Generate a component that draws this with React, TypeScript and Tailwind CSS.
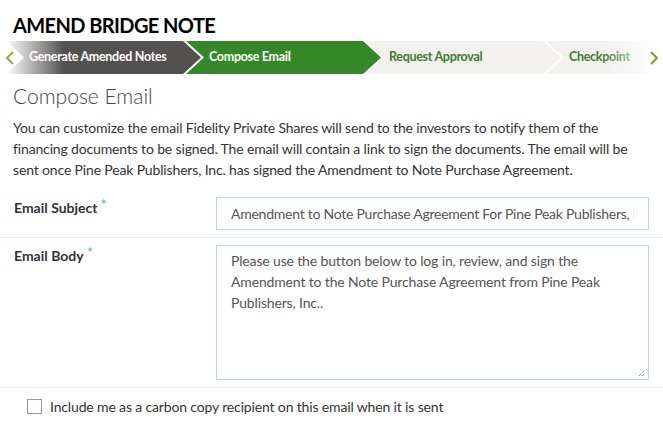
import React from "react";

const steps = [
  { label: "Generate Amended Notes", cls: "bg-[#53514f] text-white" },
  { label: "Compose Email", cls: "bg-[#368729] text-white" },
  { label: "Request Approval", cls: "bg-[#f2f1ee] text-[#3a7d2e]" },
  { label: "Checkpoint", cls: "bg-[#f2f1ee] text-[#3a7d2e]" },
];

function Breadcrumb() {
  return (
    <div className="relative h-[33px] overflow-hidden bg-white">
      <div className="flex h-full pl-[6px]">
        {steps.map((s, i) => (
          <div
            key={s.label}
            className={`shrink-0 h-full w-[195px] flex items-center pl-[23px] text-[12.5px] font-bold tracking-[-0.3px] ${
              i > 0 ? "-ml-[15px]" : ""
            } ${s.cls} [clip-path:polygon(0_0,177px_0,195px_50%,177px_100%,0_100%,18px_50%)]`}
          >
            {s.label}
          </div>
        ))}
      </div>

      {/* edge fades */}
      <div className="absolute left-0 top-0 h-full w-[64px] bg-gradient-to-r from-white from-10% to-transparent" />
      <div className="absolute right-0 top-0 h-full w-[60px] bg-gradient-to-l from-white from-10% to-transparent" />

      {/* scroll arrows */}
      <svg className="absolute left-[5px] top-[10px]" width="10" height="14" viewBox="0 0 10 14">
        <polyline points="8,1 2,7 8,13" fill="none" stroke="#8cb43c" strokeWidth="2" />
      </svg>
      <svg className="absolute right-[4px] top-[10px]" width="10" height="14" viewBox="0 0 10 14">
        <polyline points="2,1 8,7 2,13" fill="none" stroke="#6aa336" strokeWidth="2" />
      </svg>
    </div>
  );
}

function Req() {
  return <span className="ml-[3px] align-top text-[15px] leading-[14px] text-[#5aaad8] font-normal">*</span>;
}

export default function App() {
  return (
    <div className="w-[663px] h-[436px] bg-white overflow-hidden font-['Lato',sans-serif] text-[#333]">
      {/* Page title */}
      <h1 className="px-[13px] pt-[13px] pb-[4px] text-[20px] leading-[24px] font-bold text-black tracking-[-0.6px]">
        AMEND BRIDGE NOTE
      </h1>

      <Breadcrumb />

      <div className="px-[13px]">
        <h2 className="mt-[8px] text-[21px] leading-[28px] font-light text-[#444]">Compose Email</h2>
        <p className="mt-[7px] text-[14px] leading-[21px] text-[#333] tracking-[-0.15px]">
          You can customize the email Fidelity Private Shares will send to the investors to notify them of the
          financing documents to be signed. The email will contain a link to sign the documents. The email will be
          sent once Pine Peak Publishers, Inc. has signed the Amendment to Note Purchase Agreement.
        </p>
      </div>

      {/* Form */}
      <div className="mt-[17px]">
        <div className="flex border-b border-[#ebebeb] pb-[7px]">
          <label className="w-[216px] shrink-0 pl-[14px] text-[14px] leading-[21px] font-bold text-[#333]">
            Email Subject
            <Req />
          </label>
          <input
            readOnly
            value="Amendment to Note Purchase Agreement For Pine Peak Publishers, Inc."
            className="w-[433px] h-[33px] border border-[#c9d4d4] px-[14px] text-[14px] text-[#555] tracking-[-0.25px] outline-none"
          />
        </div>

        <div className="flex border-b border-[#ebebeb] pt-[7px] pb-[7px]">
          <label className="w-[216px] shrink-0 pl-[14px] text-[14px] leading-[21px] font-bold text-[#333]">
            Email Body
            <Req />
          </label>
          <div className="relative w-[433px] h-[135px] border border-[#c9d4d4] px-[14px] py-[4px] text-[14px] leading-[21px] text-[#555] tracking-[-0.15px]">
            Please use the button below to log in, review, and sign the Amendment to the Note Purchase Agreement from
            Pine Peak Publishers, Inc..
            <svg className="absolute right-[2px] bottom-[2px]" width="8" height="8" viewBox="0 0 8 8">
              <line x1="1" y1="7" x2="7" y2="1" stroke="#666" strokeWidth="1" strokeDasharray="1 1" />
              <line x1="4" y1="7" x2="7" y2="4" stroke="#666" strokeWidth="1" strokeDasharray="1 1" />
            </svg>
          </div>
        </div>

        <div className="flex items-center pl-[27px] pt-[8px]">
          <span className="w-[15px] h-[15px] border border-[#8c9a9a] bg-white" />
          <span className="ml-[8px] text-[14px] text-[#333] tracking-[-0.15px]">
            Include me as a carbon copy recipient on this email when it is sent
          </span>
        </div>
      </div>
    </div>
  );
}
